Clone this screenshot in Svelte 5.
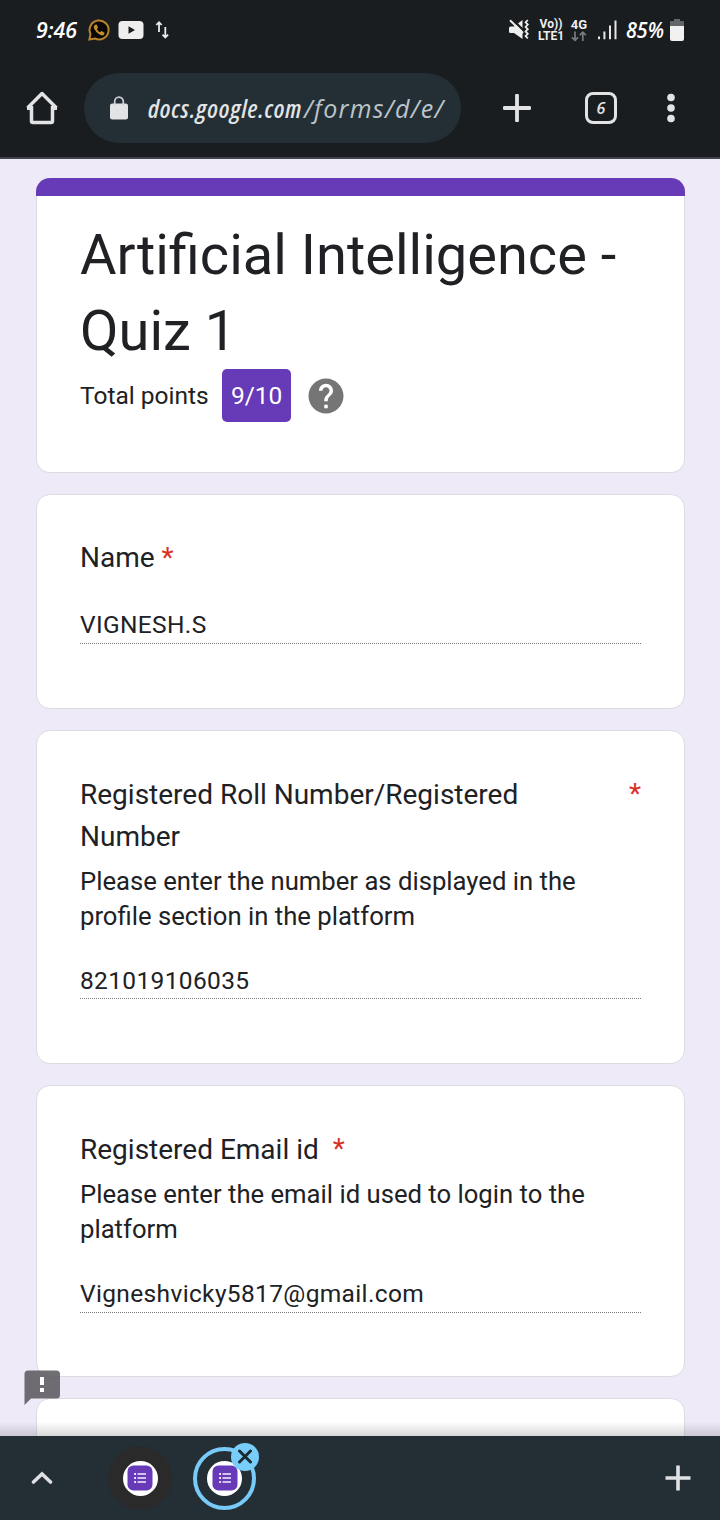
<script>
  const cards = [
    { title: 'Name', help: '', value: 'VIGNESH.S', height: 215, star: 'near' },
    {
      title: 'Registered Roll Number/Registered Number',
      help: 'Please enter the number as displayed in the profile section in the platform',
      value: '821019106035',
      height: 334,
      star: 'edge'
    },
    {
      title: 'Registered Email id',
      help: 'Please enter the email id used to login to the platform',
      value: 'Vigneshvicky5817@gmail.com',
      height: 292,
      star: 'wide'
    }
  ];
</script>

{#snippet formIcon()}
  <span class="disc">
    <svg width="26" height="26" viewBox="0 0 26 26">
      <rect x="0.5" y="0.5" width="25" height="25" rx="6" fill="#673ab7" />
      <path d="M10.5 9h8.5M10.5 13h8.5M10.5 17h8.5" stroke="#f3edfb" stroke-width="1.4" />
      <path d="M7.2 8.1h1.8v1.8H7.2zM7.2 12.1h1.8v1.8H7.2zM7.2 16.1h1.8v1.8H7.2z" fill="#f3edfb" />
    </svg>
  </span>
{/snippet}

<div class="screen">
  <header class="status">
    <svg class="clock" width="44" height="40" viewBox="0 0 44 40">
      <text x="0" y="28" textLength="41" lengthAdjust="spacingAndGlyphs" class="hand" font-size="22" fill="#fff">9:46</text>
    </svg>
    <svg class="wa" width="24" height="24" viewBox="0 0 24 24">
      <path d="M2.4 21.5 3.5 16A9.5 9.5 0 1 1 8 20.5Z" fill="#090806" stroke="#b68426" stroke-width="2" />
      <path d="M8 6.8q-2.3 2-.3 4.8 2.8 4.8 7 5.8 2.4.2 3-2.5l-3-2-1.8 1.4q-2.1-1-3-3.3l1.2-1.4-1.5-3Z" fill="#c58e2c" />
    </svg>
    <svg class="yt" width="26" height="20" viewBox="0 0 26 20">
      <rect x="0.5" y="1" width="25" height="18" rx="4" fill="#eee" /><path d="m10.5 6.3 6.5 3.7-6.5 3.7Z" fill="#1a1d1f" />
    </svg>
    <svg class="updown" width="16" height="20" viewBox="0 0 16 20" fill="none" stroke="#e9eaeb" stroke-width="1.8">
      <path d="M4 12V2M1.3 5 4 2.2 6.7 5M10.3 7v11M7.5 14.6l2.8 2.9 2.8-2.9" />
    </svg>

    <div class="right">
      <svg class="mute" width="22" height="22" viewBox="0 0 22 22">
        <path d="M0 9q0-1.5 1.5-1.5H5l8.5-6.5v19L5 14H1.5Q0 14 0 12.5Z" fill="#eee" />
        <path d="M2.5-.5 15 12" stroke="#1a1d1f" stroke-width="2.4" /><path d="M1 1.2 14 14" stroke="#eee" stroke-width="2" />
        <path d="m18.8 1-2.2 2.3 2.2 2.3-2.2 2.3 2.2 2.3-2.2 2.3 2.2 2.3-2.2 2.3 2.2 2.3" fill="none" stroke="#eee" stroke-width="1.8" />
      </svg>
      <div class="lte"><span>Vo))</span><span>LTE1</span></div>
      <div class="fourg">
        <span>4G</span>
        <svg width="16" height="11" viewBox="0 0 16 11" fill="none" stroke="#777b7d" stroke-width="1.7"><path d="M4 .5v9M1 6.4l3 3 3-3M11.8 10V1M8.8 4.2l3-3 3 3" /></svg>
      </div>
      <svg class="signal" width="20" height="22" viewBox="0 0 20 22" fill="#e5e6e6"><path d="M0 17.5h2v2.7H0zM5.4 12.5h2v7.7h-2zM11 6.5h2v13.7h-2zM16.5 1.5h2v18.7h-2z" /></svg>
      <svg class="percent" width="42" height="40" viewBox="0 0 42 40">
        <text x="0" y="28" textLength="38" lengthAdjust="spacingAndGlyphs" class="hand" font-size="22" fill="#fff">85%</text>
      </svg>
      <svg class="battery" width="14" height="22" viewBox="0 0 14 22"><path d="M4 0h6v2h3q1 0 1 1v5H0V3q0-1 1-1h3Z" fill="#626668" /><path d="M0 7h14v13q0 2-2 2H2q-2 0-2-2Z" fill="#f1f1f1" /></svg>
    </div>
  </header>

  <nav class="toolbar">
    <svg class="home" width="32" height="34" viewBox="0 0 32 34" fill="none" stroke="#e2e3e4" stroke-width="3.5" stroke-linejoin="round">
      <path d="M1.5 17 16 2.5l14.5 14.5M5.5 15v15q0 1.5 1.5 1.5h18q1.5 0 1.5-1.5V15M1 17.2h4.5M26.5 17.2H31" />
    </svg>
    <div class="address">
      <svg width="18" height="24" viewBox="0 0 18 24"><rect y="7.5" width="18" height="16" rx="2.3" fill="#e2e3e4" /><path d="M4.7 9V5.5a4.3 4.3 0 0 1 8.6 0V9" fill="none" stroke="#cfd2d4" stroke-width="1.7" /></svg>
      <span class="domain">docs.google.com</span>
      <span class="path">/forms/d/e/</span>
    </div>
    <svg class="plus" width="28" height="28" viewBox="0 0 28 28"><path d="M14 1.5v25M1.5 14h25" stroke="#e2e3e4" stroke-width="3.8" stroke-linecap="round" /></svg>
    <div class="tabs"><span>6</span></div>
    <svg class="dots" width="8" height="30" viewBox="0 0 8 30" fill="#e2e3e4"><circle cx="4" cy="4.5" r="3.8" /><circle cx="4" cy="15" r="3.8" /><circle cx="4" cy="25.5" r="3.8" /></svg>
  </nav>

  <main>
    <section class="card intro">
      <h1>Artificial Intelligence - Quiz 1</h1>
      <div class="points">
        <span>Total points</span>
        <strong>9/10</strong>
        <svg width="42" height="42" viewBox="0 0 24 24" fill="#757575"><path d="M12 2C6.48 2 2 6.48 2 12s4.48 10 10 10 10-4.48 10-10S17.52 2 12 2zm1 17h-2v-2h2v2zm2.07-7.75-.9.92C13.45 12.9 13 13.5 13 15h-2v-.5c0-1.1.45-2.1 1.17-2.83l1.24-1.26c.37-.36.59-.86.59-1.41 0-1.1-.9-2-2-2s-2 .9-2 2H8c0-2.21 1.79-4 4-4s4 1.79 4 4c0 .88-.36 1.68-.93 2.25z" /></svg>
      </div>
    </section>

    {#each cards as card}
      <section class="card question" class:helped={card.help} style:height="{card.height}px">
        <div class="heading {card.star}">
          <h2>{card.title}</h2>
          <span class="star">*</span>
        </div>
        {#if card.help}<p>{card.help}</p>{/if}
        <div class="answer {card.star}-answer">{card.value}</div>
      </section>
    {/each}
    <section class="card next"></section>

    <svg class="report" width="36" height="36" viewBox="0 0 36 36">
      <path d="M4 .5h28.5q3.5 0 3.5 3.5v21q0 3.5-3.5 3.5H7L.5 35V4Q.5.5 4 .5ZM16 7v8h4V7ZM16 18v4h4v-4Z" fill="#58565c" fill-rule="evenodd" opacity=".86" />
      <path d="M16 7h4v8h-4zM16 18h4v4h-4z" fill="#fff" />
    </svg>
  </main>

  <footer>
    <svg class="up" width="22" height="14" viewBox="0 0 22 14"><path d="m2.5 11 8.5-8 8.5 8" fill="none" stroke="#dfe0e2" stroke-width="3.6" stroke-linecap="round" /></svg>
    <div class="tab">{@render formIcon()}</div>
    <div class="tab active">
      {@render formIcon()}
      <span class="close"><svg width="16" height="16" viewBox="0 0 16 16"><path d="m2.5 2 11 11M13.5 2l-11 11" stroke="#1c2b32" stroke-width="3" stroke-linecap="round" /></svg></span>
    </div>
    <svg class="add" width="26" height="26" viewBox="0 0 26 26"><path d="M13 .5v25M.5 13h25" stroke="#e0e1e3" stroke-width="3.6" /></svg>
  </footer>
</div>

<style>
  :global(body) { margin: 0; }
  * { box-sizing: border-box; }
  svg { display: block; flex: none; }
  h1, h2, p { margin: 0; font-weight: 400; }
  .screen { width: 720px; height: 1520px; display: flex; flex-direction: column; overflow: hidden; background: #eeeaf8; color: #202124; font-family: Roboto, sans-serif; }
  .hand { font-family: 'Open Sans', sans-serif; font-style: italic; font-weight: 600; }

  .status { height: 60px; flex: none; display: flex; align-items: center; background: #1a1d1f; padding: 0 36px; }
  .wa { margin-left: 7px; }
  .yt { margin-left: 7px; }
  .updown { margin-left: 11px; }
  .right { margin-left: auto; display: flex; align-items: center; }
  .lte { width: 28px; margin-left: 6px; display: flex; flex-direction: column; align-items: center; color: #eee; font-size: 12px; line-height: 12px; font-weight: 700; }
  .fourg { width: 18px; margin-left: 5px; display: flex; flex-direction: column; align-items: center; color: #eee; font-size: 13px; line-height: 13px; font-weight: 700; }
  .signal { margin-left: 10px; }
  .percent { margin-left: 8px; }
  .battery { margin-left: 2px; }

  .toolbar { height: 99px; flex: none; display: flex; align-items: center; padding: 0 45px 2px 26px; background: #1a1d1f; border-bottom: 2px solid #40434b; }
  .address { width: 377px; height: 70px; display: flex; align-items: center; margin-left: 26px; padding-left: 26px; border-radius: 35px; background: #232f35; white-space: nowrap; font-family: 'Open Sans', sans-serif; font-style: italic; line-height: 40px; }
  .domain { width: 156px; flex: none; margin-left: 20px; color: #e3e4e5; font-size: 25px; font-weight: 600; font-stretch: 75%; letter-spacing: .9px; }
  .path { color: #bcc4ca; font-size: 25px; font-weight: 500; letter-spacing: 1.3px; }
  .plus { margin-left: 42px; }
  .tabs { width: 32px; height: 32px; margin-left: 54px; border: 3px solid #e2e3e4; border-radius: 8px; display: flex; align-items: center; justify-content: center; color: #e2e3e4; font: italic 600 16px 'Open Sans', sans-serif; }
  .dots { margin-left: 50px; }

  main { position: relative; height: 1277px; flex: none; overflow: hidden; padding: 19px 35px 0 36px; display: flex; flex-direction: column; gap: 21px; }
  main::after { content: ''; position: absolute; left: 0; right: 0; bottom: 0; height: 14px; background: linear-gradient(transparent, rgba(40, 40, 50, .18)); }
  .card { flex: none; background: #fff; border: 1px solid #dadce0; border-radius: 14px; padding: 0 43px; }
  .intro { position: relative; height: 295px; padding-top: 40px; border-top: 0; }
  .intro::before { content: ''; position: absolute; top: 0; left: -1px; right: -1px; height: 18px; border-radius: 14px 14px 0 0; background: #673ab7; }
  h1 { font-size: 56px; line-height: 75.5px; }
  .points { height: 53px; display: flex; align-items: center; font-size: 24.5px; }
  .points strong { height: 53px; width: 69px; margin: 0 14px 0 13px; padding-left: 1px; display: flex; align-items: center; justify-content: center; border-radius: 5px; color: #fff; background: #673ab7; font-weight: 400; }
  .question { padding-top: 42px; }
  .helped { padding-top: 43px; }
  .heading { display: flex; font-size: 28px; line-height: 42px; }
  h2 { font-size: 28px; line-height: 42px; }
  .star { color: #d93025; margin-left: 7px; }
  .helped .star { margin-top: -1px; }
  .wide .star { margin-left: 14px; }
  .edge { justify-content: space-between; }
  .edge h2 { width: 460px; }
  .wide { height: 42px; }
  p { margin-top: 6px; font-size: 25.67px; line-height: 35px; }
  .answer { margin-top: 29px; height: 36px; line-height: 34px; font-size: 24.5px; letter-spacing: .35px; border-bottom: 1px dotted #777; }
  .edge-answer { line-height: 36px; }
  .wide-answer { margin-top: 30px; }
  .next { height: 100px; }
  .report { position: absolute; left: 24px; top: 1211px; }

  footer { height: 84px; flex: none; display: flex; align-items: center; padding: 0 29px 0 31px; background: #232f35; }
  .tab { position: relative; width: 64px; height: 64px; margin-left: 55px; display: flex; align-items: center; justify-content: center; border-radius: 50%; background: #2a2a2b; }
  .tab.active { width: 63px; height: 63px; margin-left: 21px; background: none; border: 4px solid #78cbf8; }
  .disc { width: 35px; height: 35px; border-radius: 50%; background: #fff; display: flex; align-items: center; justify-content: center; }
  .close { position: absolute; right: -7px; top: -8px; width: 28px; height: 28px; border-radius: 50%; display: flex; align-items: center; justify-content: center; background: #78cdfb; }
  .add { margin-left: auto; }
</style>
